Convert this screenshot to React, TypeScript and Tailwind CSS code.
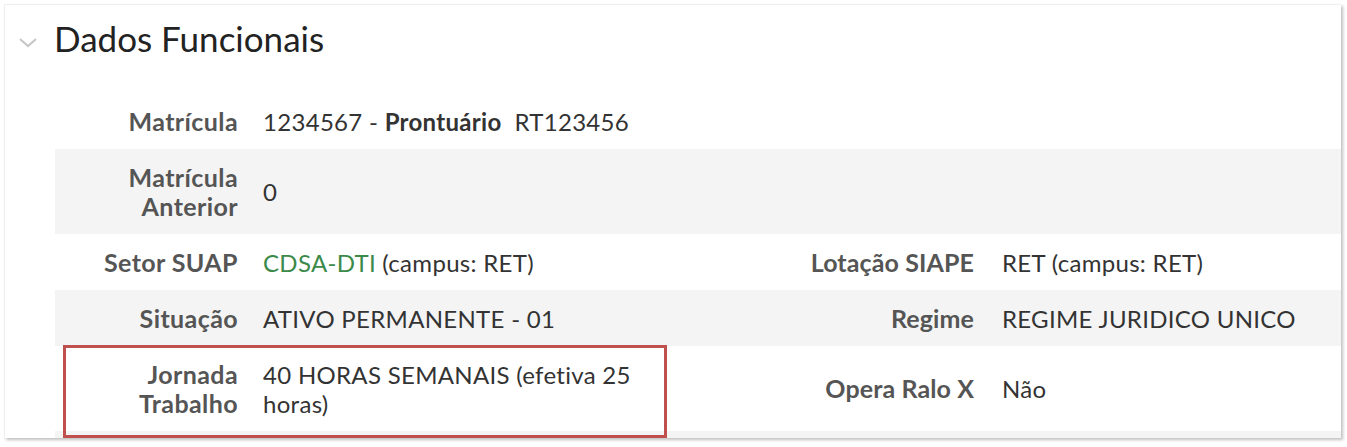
import { ReactNode } from 'react';

type Row = {
  label: ReactNode;
  value: ReactNode;
  label2?: ReactNode;
  value2?: ReactNode;
  tall?: boolean;
};

const rows: Row[] = [
  {
    label: 'Matrícula',
    value: (
      <>
        1234567 - <strong className="font-bold text-[#333]">Prontuário</strong>&nbsp; RT123456
      </>
    ),
  },
  {
    label: (
      <>
        Matrícula
        <br />
        Anterior
      </>
    ),
    value: '0',
    tall: true,
  },
  {
    label: 'Setor SUAP',
    value: (
      <>
        <span className="text-[#3b8a4a]">CDSA-DTI</span> (campus: RET)
      </>
    ),
    label2: 'Lotação SIAPE',
    value2: 'RET (campus: RET)',
  },
  {
    label: 'Situação',
    value: 'ATIVO PERMANENTE - 01',
    label2: 'Regime',
    value2: 'REGIME JURIDICO UNICO',
  },
  {
    label: (
      <>
        Jornada
        <br />
        Trabalho
      </>
    ),
    value: (
      <>
        40 HORAS SEMANAIS (efetiva 25
        <br />
        horas)
      </>
    ),
    label2: 'Opera Ralo X',
    value2: 'Não',
    tall: true,
  },
];

function Chevron() {
  return (
    <svg width="20" height="12" viewBox="0 0 20 12" className="text-[#c8c8c8]">
      <path d="M2 2 L10 9 L18 2" fill="none" stroke="currentColor" strokeWidth="2.2" />
    </svg>
  );
}

export default function App() {
  return (
    <div className="min-h-[447px] bg-white pl-1 pt-1 font-['Lato','Open_Sans',sans-serif]">
      <div className="relative h-[434px] w-[1337px] overflow-hidden border-t border-l border-[#f0f0f0] bg-white shadow-[2px_2px_3px_rgba(0,0,0,0.25)]">
        <div className="flex h-[88px] items-start gap-[16px] pl-[13px] pt-[12px]">
          <div className="pt-[20px]">
            <Chevron />
          </div>
          <h2 className="text-[35px] leading-[42px] text-[#222]">Dados Funcionais</h2>
        </div>

        <div className="ml-[50px] grid grid-cols-[196px_498px_239px_1fr] text-[24px] leading-[29px] tracking-[0.3px]">
          {rows.map((row, i) => {
            const bg = i % 2 === 1 ? 'bg-[#f4f4f4]' : 'bg-white';
            const h = row.tall ? 'h-[85px]' : 'h-[56px]';
            return (
              <div key={i} className={`col-span-4 grid grid-cols-subgrid ${bg} ${h}`}>
                <div className="flex items-center justify-end pr-[13px] text-right text-[25px] font-bold tracking-[0.4px] text-[#555]">
                  <span>{row.label}</span>
                </div>
                <div className="flex items-center pl-[12px] text-[#333]">
                  <span>{row.value}</span>
                </div>
                <div className="flex items-center justify-end pr-[14px] text-right text-[25px] font-bold tracking-[0.1px] text-[#555]">
                  <span>{row.label2}</span>
                </div>
                <div className="flex items-center pl-[14px] text-[#333]">
                  <span>{row.value2}</span>
                </div>
              </div>
            );
          })}
          <div className="col-span-4 h-[40px] bg-[#f4f4f4]" />
        </div>

        <div className="pointer-events-none absolute left-[58px] top-[340px] h-[93px] w-[604px] border-[3px] border-[#c0504d]" />
      </div>
    </div>
  );
}
